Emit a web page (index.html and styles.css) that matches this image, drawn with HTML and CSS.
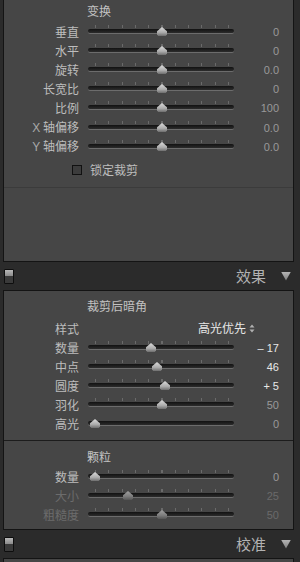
FILE: index.html
```html
<!DOCTYPE html>
<html lang="zh">
<head>
<meta charset="utf-8">
<link rel="stylesheet" href="styles.css">
</head>
<body>
<div class="app">
  <section class="panel p1">
    <div class="sec s1">
      <div class="sec-title">变换</div>
      <div class="row"><span class="lbl">垂直</span><div class="slider"><div class="track"></div><i class="ticks"></i><b class="thumb" style="left:69px"></b></div><span class="val">0</span></div>
      <div class="row"><span class="lbl">水平</span><div class="slider"><div class="track"></div><i class="ticks"></i><b class="thumb" style="left:69px"></b></div><span class="val">0</span></div>
      <div class="row"><span class="lbl">旋转</span><div class="slider"><div class="track"></div><i class="ticks"></i><b class="thumb" style="left:69px"></b></div><span class="val">0.0</span></div>
      <div class="row"><span class="lbl">长宽比</span><div class="slider"><div class="track"></div><i class="ticks"></i><b class="thumb" style="left:69px"></b></div><span class="val">0</span></div>
      <div class="row"><span class="lbl">比例</span><div class="slider"><div class="track"></div><i class="ticks"></i><b class="thumb" style="left:69px"></b></div><span class="val">100</span></div>
      <div class="row"><span class="lbl"><span class="lat">X</span> 轴偏移</span><div class="slider"><div class="track"></div><i class="ticks"></i><b class="thumb" style="left:69px"></b></div><span class="val">0.0</span></div>
      <div class="row"><span class="lbl"><span class="lat">Y</span> 轴偏移</span><div class="slider"><div class="track"></div><i class="ticks"></i><b class="thumb" style="left:69px"></b></div><span class="val">0.0</span></div>
      <div class="check"><span class="box"></span><span class="check-lbl">锁定裁剪</span></div>
    </div>
    <div class="empty"></div>
  </section>

  <header class="hd"><span class="sw"></span><span class="hd-t">效果</span><span class="tri"></span></header>

  <section class="panel p2">
    <div class="sec s2">
      <div class="sec-title">裁剪后暗角</div>
      <div class="row style-row"><span class="lbl">样式</span><span class="sel">高光优先<svg class="updown" width="6" height="9" viewBox="0 0 6 9"><path d="M3 0.5 L5.5 3.5 H0.5 Z M3 8.5 L5.5 5.5 H0.5 Z" fill="#b0b0b0"/></svg></span></div>
      <div class="row"><span class="lbl">数量</span><div class="slider"><div class="track"></div><i class="ticks"></i><b class="thumb" style="left:58px"></b></div><span class="val hi">– 17</span></div>
      <div class="row"><span class="lbl">中点</span><div class="slider"><div class="track"></div><i class="ticks"></i><b class="thumb" style="left:64px"></b></div><span class="val hi">46</span></div>
      <div class="row"><span class="lbl">圆度</span><div class="slider"><div class="track"></div><i class="ticks"></i><b class="thumb" style="left:72px"></b></div><span class="val hi">+ 5</span></div>
      <div class="row"><span class="lbl">羽化</span><div class="slider"><div class="track"></div><i class="ticks"></i><b class="thumb" style="left:69px"></b></div><span class="val">50</span></div>
      <div class="row"><span class="lbl">高光</span><div class="slider"><div class="track"></div><b class="thumb" style="left:2px"></b></div><span class="val">0</span></div>
    </div>
    <div class="sec s3">
      <div class="sec-title">颗粒</div>
      <div class="row"><span class="lbl">数量</span><div class="slider"><div class="track"></div><i class="ticks"></i><b class="thumb" style="left:2px"></b></div><span class="val">0</span></div>
      <div class="row off"><span class="lbl">大小</span><div class="slider"><div class="track"></div><i class="ticks"></i><b class="thumb" style="left:35px"></b></div><span class="val">25</span></div>
      <div class="row off"><span class="lbl">粗糙度</span><div class="slider"><div class="track"></div><i class="ticks"></i><b class="thumb" style="left:69px"></b></div><span class="val">50</span></div>
    </div>
  </section>

  <header class="hd"><span class="sw"></span><span class="hd-t">校准</span><span class="tri"></span></header>

  <section class="panel p3"></section>
</div>
</body>
</html>
```

FILE: styles.css
```css
* { box-sizing: border-box; }

html, body {
  margin: 0;
  padding: 0;
}

body {
  width: 300px;
  height: 562px;
  overflow: hidden;
  background: #2b2b2b;
  font-family: "Noto Sans CJK SC", "Noto Sans", sans-serif;
  font-size: 12px;
  color: #bdbdbd;
}

.app {
  width: 300px;
}

.panel {
  margin-left: 3px;
  width: 291px;
  background: #464646;
  border-left: 1px solid #141414;
  border-right: 1px solid #141414;
}

.p1 { border-bottom: 1px solid #141414; }
.p2 { border-top: 1px solid #141414; border-bottom: 1px solid #141414; }
.p3 { border-top: 1px solid #141414; height: 10px; }

.sec-title {
  height: 14px;
  line-height: 14px;
  padding-left: 83px;
  color: #c2c2c2;
  white-space: nowrap;
}

.s1 {
  padding-top: 4px;
  padding-bottom: 7px;
  border-bottom: 1px solid #3b3b3b;
}
.s1 .sec-title { margin-bottom: 4px; }

.s2 {
  padding-top: 8px;
  padding-bottom: 7px;
  border-bottom: 1px solid #1c1c1c;
}
.s2 .sec-title { margin-bottom: 5px; }

.s3 {
  padding-top: 9px;
  padding-bottom: 5px;
}
.s3 .sec-title { margin-bottom: 3px; }

.empty { height: 73px; }

.row {
  display: grid;
  grid-template-columns: 84px 146px 45px;
  height: 19px;
  align-items: center;
}

.style-row { height: 20px; }

.lbl {
  text-align: right;
  padding-right: 9px;
  line-height: 19px;
  white-space: nowrap;
}

.lat {
  font-family: "Liberation Sans", Arial, sans-serif;
  font-size: 12px;
  color: #a8a8a8;
}

.val {
  text-align: right;
  font-family: "Liberation Sans", Arial, sans-serif;
  font-size: 11px;
  color: #999999;
  white-space: nowrap;
}
.val.hi { color: #e8e8e8; }

.off .lbl { color: #6c6c6c; }
.off .val { color: #6a6a6a; }

.slider {
  position: relative;
  height: 19px;
}

.track {
  margin-top: 7px;
  width: 146px;
  height: 4px;
  border-radius: 2px;
  background: linear-gradient(#121212, #2c2c2c);
  box-shadow: 0 1px 0 #6c6c6c;
}

.ticks {
  position: absolute;
  left: 7px;
  top: 3px;
  width: 134px;
  height: 3px;
  background: repeating-linear-gradient(to right, #6a6a6a 0 1px, transparent 1px 13.3px);
}

.thumb {
  position: absolute;
  top: 5px;
  width: 10px;
  height: 9px;
  clip-path: polygon(50% 0, 100% 48%, 100% 80%, 88% 100%, 12% 100%, 0 80%, 0 48%);
  background: linear-gradient(#dadada, #acacac 60%, #6e6e6e);
}
.off .thumb {
  background: linear-gradient(#a0a0a0, #7c7c7c 60%, #555555);
}

.sel {
  grid-column: 2 / 4;
  padding-left: 110px;
  display: flex;
  align-items: center;
  color: #e6e6e6;
  line-height: 20px;
  white-space: nowrap;
}
.updown { margin-left: 3px; }

.check {
  display: flex;
  align-items: center;
  height: 20px;
  margin-top: 5px;
  padding-left: 68px;
}
.box {
  width: 10px;
  height: 10px;
  border: 1px solid #111111;
  background: #3c3c3c;
  margin-right: 8px;
}
.check-lbl { color: #bdbdbd; line-height: 20px; }

.hd {
  height: 28px;
  display: flex;
  align-items: center;
  padding: 0 9px 0 4px;
  background: #2b2b2b;
}
.sw {
  width: 10px;
  height: 15px;
  margin-right: auto;
  border: 1px solid #0e0e0e;
  border-radius: 1px;
  background: linear-gradient(#b8b8b8, #8c8c8c 45%, #3a3a3a 50%, #3a3a3a);
}
.hd-t {
  font-size: 15px;
  line-height: 28px;
  color: #b2b2b2;
  margin-right: 15px;
}
.tri {
  width: 10px;
  height: 9px;
  clip-path: polygon(0 0, 100% 0, 50% 100%);
  background: linear-gradient(#b4b4b4, #7c7c7c);
}
```
